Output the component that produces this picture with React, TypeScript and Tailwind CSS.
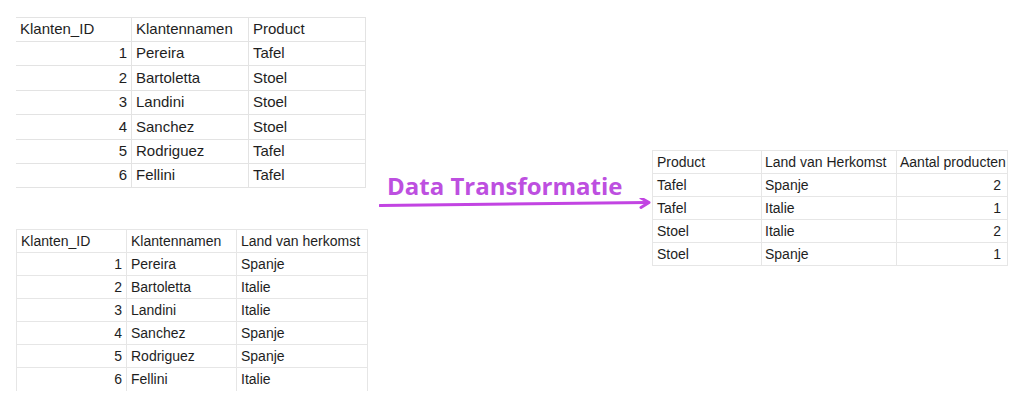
import React from "react";

const t1 = [
  ["1", "Pereira", "Tafel"],
  ["2", "Bartoletta", "Stoel"],
  ["3", "Landini", "Stoel"],
  ["4", "Sanchez", "Stoel"],
  ["5", "Rodriguez", "Tafel"],
  ["6", "Fellini", "Tafel"],
];
const t2 = [
  ["1", "Pereira", "Spanje"],
  ["2", "Bartoletta", "Italie"],
  ["3", "Landini", "Italie"],
  ["4", "Sanchez", "Spanje"],
  ["5", "Rodriguez", "Spanje"],
  ["6", "Fellini", "Italie"],
];
const t3 = [
  ["Tafel", "Spanje", "2"],
  ["Tafel", "Italie", "1"],
  ["Stoel", "Italie", "2"],
  ["Stoel", "Spanje", "1"],
];

export default function App() {
  return (
    <div
      className="w-[1024px] h-[407px] bg-white flex items-start text-[#1e1e1e] overflow-hidden"
      style={{ fontFamily: '"Liberation Sans", Arial, sans-serif' }}
    >
      {/* Left column */}
      <div className="flex flex-col pl-[16px] pt-[17px] w-[370px] shrink-0">
        <div className="w-[350px] border-t border-r border-[#e3e3e3] text-[15px]">
          <div className="flex h-[24px] border-b border-[#e3e3e3]">
            <div className="w-[116px] pl-[4px] flex items-center border-r border-[#e3e3e3]">Klanten_ID</div>
            <div className="w-[117px] pl-[4px] flex items-center border-r border-[#e3e3e3]">Klantennamen</div>
            <div className="flex-1 pl-[4px] flex items-center">Product</div>
          </div>
          {t1.map((r) => (
            <div key={r[0]} className="flex h-[24.4px] border-b border-[#e3e3e3]">
              <div className="w-[116px] pr-[4px] flex items-center justify-end border-r border-[#e3e3e3]">{r[0]}</div>
              <div className="w-[117px] pl-[4px] flex items-center border-r border-[#e3e3e3]">{r[1]}</div>
              <div className="flex-1 pl-[4px] flex items-center">{r[2]}</div>
            </div>
          ))}
        </div>

        <div className="mt-[41px] w-[352px] border-t border-l border-r border-[#e6e6e6] text-[14px]">
          <div className="flex h-[23px] border-b border-[#e6e6e6]">
            <div className="w-[110px] pl-[4px] flex items-center border-r border-[#e6e6e6]">Klanten_ID</div>
            <div className="w-[110px] pl-[4px] flex items-center border-r border-[#e6e6e6]">Klantennamen</div>
            <div className="flex-1 pl-[4px] flex items-center whitespace-nowrap">Land van herkomst</div>
          </div>
          {t2.map((r, i) => (
            <div
              key={r[0]}
              className={
                i < t2.length - 1
                  ? "flex h-[23px] border-b border-[#e6e6e6]"
                  : "flex h-[23px]"
              }
            >
              <div className="w-[110px] pr-[4px] flex items-center justify-end border-r border-[#e6e6e6]">{r[0]}</div>
              <div className="w-[110px] pl-[4px] flex items-center border-r border-[#e6e6e6]">{r[1]}</div>
              <div className="flex-1 pl-[4px] flex items-center">{r[2]}</div>
            </div>
          ))}
        </div>
      </div>

      {/* Middle: heading + arrow */}
      <div className="flex flex-col w-[273px] shrink-0 mt-[172px] ml-[9px]">
        <div
          className="text-[24px] font-bold leading-[28px] text-[#bd4fe0] pl-[8px] whitespace-nowrap"
          style={{ fontFamily: '"Open Sans", sans-serif' }}
        >
          Data Transformatie
        </div>
        <svg width="273" height="12" viewBox="0 0 273 12" className="-mt-[2px]">
          <line x1="1" y1="7.5" x2="269" y2="4.5" stroke="#c244e2" strokeWidth="3" strokeLinecap="round" />
          <polyline
            points="262,0 270,4.5 262,9.5"
            fill="none"
            stroke="#c244e2"
            strokeWidth="3"
            strokeLinecap="round"
            strokeLinejoin="round"
          />
        </svg>
      </div>

      {/* Right table */}
      <div className="mt-[150px] w-[356px] shrink-0 border-t border-l border-r border-[#e6e6e6] text-[14px]">
        <div className="flex h-[23px] border-b border-[#e6e6e6]">
          <div className="w-[109px] pl-[4px] flex items-center border-r border-[#e6e6e6]">Product</div>
          <div className="w-[135px] pl-[3px] flex items-center border-r border-[#e6e6e6] whitespace-nowrap">Land van Herkomst</div>
          <div className="flex-1 pl-[3px] flex items-center whitespace-nowrap">Aantal producten</div>
        </div>
        {t3.map((r, i) => (
          <div key={i} className="flex h-[23px] border-b border-[#e6e6e6]">
            <div className="w-[109px] pl-[4px] flex items-center border-r border-[#e6e6e6]">{r[0]}</div>
            <div className="w-[135px] pl-[3px] flex items-center border-r border-[#e6e6e6]">{r[1]}</div>
            <div className="flex-1 pr-[6px] flex items-center justify-end">{r[2]}</div>
          </div>
        ))}
      </div>
    </div>
  );
}
